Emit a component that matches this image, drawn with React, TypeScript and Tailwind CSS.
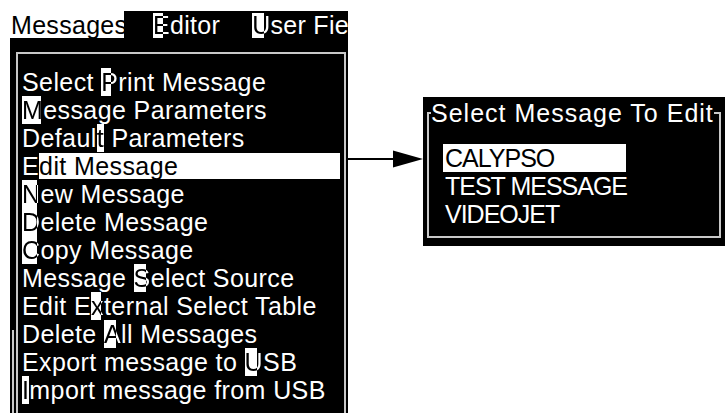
const boxes = {
  b8: {
    bg: 'bg-[linear-gradient(to_right,#fff_8px,transparent_8px)]',
    fg: 'bg-[linear-gradient(to_right,#000_8px,#fff_8px)]',
  },
  b10: {
    bg: 'bg-[linear-gradient(to_right,#fff_10px,transparent_10px)]',
    fg: 'bg-[linear-gradient(to_right,#000_10px,#fff_10px)]',
  },
  b12: {
    bg: 'bg-[linear-gradient(to_right,#fff_12px,transparent_12px)]',
    fg: 'bg-[linear-gradient(to_right,#000_12px,#fff_12px)]',
  },
  b15: {
    bg: 'bg-[linear-gradient(to_right,#fff_15px,transparent_15px)]',
    fg: 'bg-[linear-gradient(to_right,#000_15px,#fff_15px)]',
  },
  b19: {
    bg: 'bg-[linear-gradient(to_right,#fff_19px,transparent_19px)]',
    fg: 'bg-[linear-gradient(to_right,#000_19px,#fff_19px)]',
  },
};

type BoxKey = keyof typeof boxes;

// hotkey letter: a white cursor cell that only covers part of the glyph
function Hot({ ch, box }: { ch: string; box: BoxKey }) {
  const b = boxes[box];
  return (
    <span className={`inline-block ${b.bg}`}>
      <span className={`${b.fg} bg-clip-text text-transparent`}>{ch}</span>
    </span>
  );
}

const items: { pre: string; key: string; post: string; box: BoxKey; active?: boolean }[] = [
  { pre: 'Select ', key: 'P', post: 'rint Message', box: 'b10' },
  { pre: '', key: 'M', post: 'essage Parameters', box: 'b19' },
  { pre: 'Defaul', key: 't', post: ' Parameters', box: 'b10' },
  { pre: '', key: 'E', post: 'dit Message', box: 'b15', active: true },
  { pre: '', key: 'N', post: 'ew Message', box: 'b15' },
  { pre: '', key: 'D', post: 'elete Message', box: 'b15' },
  { pre: '', key: 'C', post: 'opy Message', box: 'b15' },
  { pre: 'Message ', key: 'S', post: 'elect Source', box: 'b12' },
  { pre: 'Edit E', key: 'x', post: 'ternal Select Table', box: 'b10' },
  { pre: 'Delete ', key: 'A', post: 'll Messages', box: 'b12' },
  { pre: 'Export message to ', key: 'U', post: 'SB', box: 'b12' },
  { pre: '', key: 'I', post: 'mport message from USB', box: 'b8' },
];

const messages = ['CALYPSO', 'TEST MESSAGE', 'VIDEOJET'];

export default function App() {
  return (
    <div className="w-[725px] h-[413px] overflow-hidden bg-white flex items-start font-['Liberation_Sans',Arial,sans-serif] text-[25px]">
      {/* Printer menu */}
      <div className="ml-[10px] mt-[11px] w-[338px] h-[402px] bg-black text-white flex flex-col">
        <div className="h-[27px] mr-[2px] flex whitespace-nowrap leading-[25px] tracking-[0.3px]">
          <span className="w-[114px] bg-white text-black pl-[1px] pt-[2px]">Messages</span>
          <span className="ml-[29px] pt-[2px]">
            <Hot ch="E" box="b10" />
            ditor
          </span>
          <span className="ml-[32px] pt-[2px]">
            <Hot ch="U" box="b12" />
            ser Fie
          </span>
        </div>

        <div className="flex flex-1 mt-[14px]">
          <div className="w-[6px] flex flex-col">
            <div className="flex-1" />
            <div className="ml-[2px] w-[2px] h-[83px] bg-[#c8c8c8]" />
          </div>
          <div className="w-[330px] border-2 border-b-0 border-[#c8c8c8] pt-[14px] pl-[4px] pr-[4px]">
            {items.map((it) =>
              it.active ? (
                <div key={it.post} className="flex h-[28px] leading-[28px] whitespace-pre tracking-[0.4px]">
                  <span>{it.key}</span>
                  <span className="flex-1 bg-white text-black my-[1px] leading-[26px]">{it.post}</span>
                </div>
              ) : (
                <div key={it.post} className="h-[28px] leading-[28px] whitespace-pre tracking-[0.4px]">
                  {it.pre}
                  <Hot ch={it.key} box={it.box} />
                  {it.post}
                </div>
              )
            )}
          </div>
        </div>
      </div>

      {/* Arrow + message picker */}
      <div className="flex items-start pt-[97px]">
        <svg className="mt-[53px]" width="75" height="18" viewBox="0 0 75 18">
          <rect x="0" y="8" width="47" height="2" fill="#000" />
          <polygon points="45,0.5 75,9 45,17.5" fill="#000" />
        </svg>
        <div className="w-[302px] bg-black text-white pt-[2px] px-[4px] pb-[8px]">
          <fieldset className="border-2 border-[#c8c8c8] p-0 pb-[8px] m-0">
            <legend className="px-0 ml-[2px] leading-[28px] tracking-[1px] whitespace-nowrap bg-black">
              Select Message To Edit
            </legend>
            <div className="mt-[17px] pl-[14px]">
              {messages.map((m, i) => (
                <div
                  key={m}
                  className={`h-[28px] leading-[28px] pl-[2px] tracking-[-1px] whitespace-pre ${
                    i === 0 ? 'w-[183px] bg-white text-black' : ''
                  }`}
                >
                  {m}
                </div>
              ))}
            </div>
          </fieldset>
        </div>
      </div>
    </div>
  );
}
